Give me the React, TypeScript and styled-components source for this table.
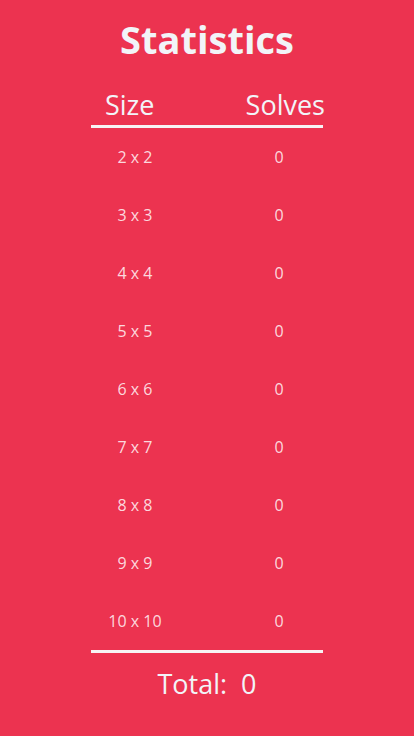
import React from "react";
import styled, { createGlobalStyle } from "styled-components";

const Global = createGlobalStyle`
  html, body { margin: 0; padding: 0; background: #ec3350; }
  body { font-family: "Open Sans", "Noto Sans", sans-serif; }
`;

const Page = styled.div`
  width: 414px;
  height: 736px;
  background: #ec3350;
  display: flex;
  flex-direction: column;
  align-items: center;
  box-sizing: border-box;
  padding-top: 14px;
  overflow: hidden;
`;

const Title = styled.h1`
  margin: 0;
  font-size: 38px;
  font-weight: 700;
  line-height: 50px;
  color: #f2f4f8;
`;

const Table = styled.div`
  width: 232px;
  margin-top: 24px;
  display: flex;
  flex-direction: column;
`;

const Header = styled.div`
  display: flex;
  justify-content: space-between;
  padding-left: 14px;
  font-size: 27px;
  line-height: 34px;
  color: #f2f4f8;
  border-bottom: 3px solid #f7f3f4;
  padding-bottom: 3px;
`;

const HeaderLabel = styled.span<{ $overhang?: boolean }>`
  margin-right: ${(p) => (p.$overhang ? "-2px" : "0")};
`;

const Row = styled.div`
  display: grid;
  grid-template-columns: 88px 1fr 88px;
  height: 58px;
  align-items: center;
  font-size: 16px;
  font-weight: 400;
  color: rgba(255, 240, 243, 0.88);
`;

const Cell = styled.span<{ $col: number }>`
  grid-column: ${(p) => p.$col};
  text-align: center;
`;

const Body = styled.div`
  display: flex;
  flex-direction: column;
  border-bottom: 3px solid #f7f3f4;
`;

const Total = styled.div`
  margin-top: 11px;
  font-size: 27px;
  line-height: 40px;
  color: #f2f4f8;
  text-align: center;
  white-space: pre;
`;

const sizes = [2, 3, 4, 5, 6, 7, 8, 9, 10];

export default function App() {
  return (
    <>
      <Global />
      <Page>
        <Title>Statistics</Title>
        <Table>
          <Header>
            <HeaderLabel>Size</HeaderLabel>
            <HeaderLabel $overhang>Solves</HeaderLabel>
          </Header>
          <Body>
            {sizes.map((n) => (
              <Row key={n}>
                <Cell $col={1}>{`${n} x ${n}`}</Cell>
                <Cell $col={3}>0</Cell>
              </Row>
            ))}
          </Body>
          <Total>{"Total:  0"}</Total>
        </Table>
      </Page>
    </>
  );
}
